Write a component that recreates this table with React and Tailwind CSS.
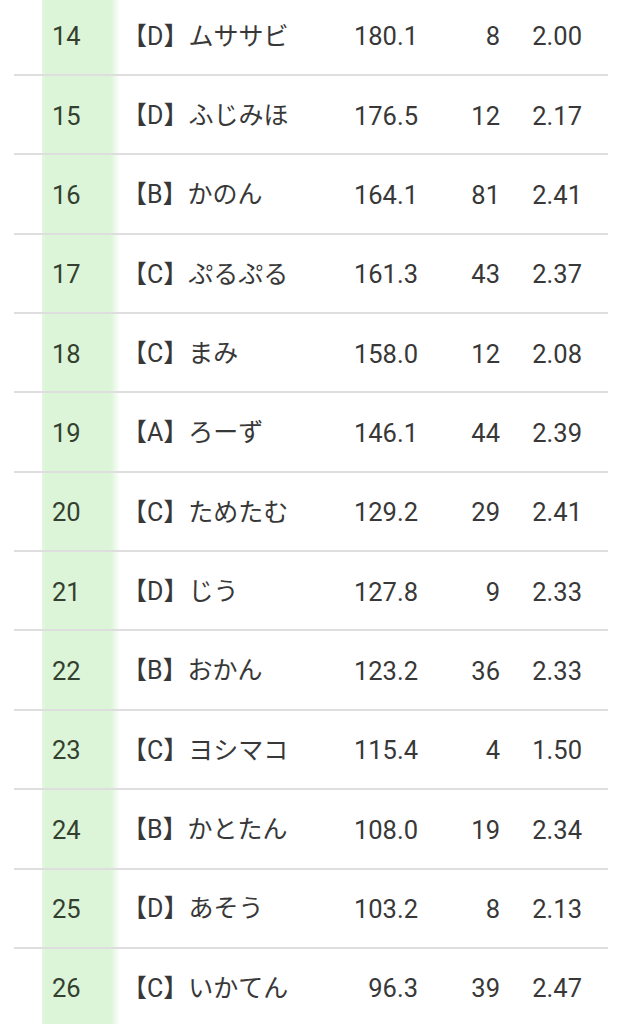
import React from 'react';

const rows = [
    [14, 'D', 'ムササビ', '180.1', '8', '2.00'],
    [15, 'D', 'ふじみほ', '176.5', '12', '2.17'],
    [16, 'B', 'かのん', '164.1', '81', '2.41'],
    [17, 'C', 'ぷるぷる', '161.3', '43', '2.37'],
    [18, 'C', 'まみ', '158.0', '12', '2.08'],
    [19, 'A', 'ろーず', '146.1', '44', '2.39'],
    [20, 'C', 'ためたむ', '129.2', '29', '2.41'],
    [21, 'D', 'じう', '127.8', '9', '2.33'],
    [22, 'B', 'おかん', '123.2', '36', '2.33'],
    [23, 'C', 'ヨシマコ', '115.4', '4', '1.50'],
    [24, 'B', 'かとたん', '108.0', '19', '2.34'],
    [25, 'D', 'あそう', '103.2', '8', '2.13'],
    [26, 'C', 'いかてん', '96.3', '39', '2.47'],
];

const App = () => {
    return (
        <div className="w-[622px] h-[1024px] overflow-hidden bg-white font-['Roboto','Noto_Sans_CJK_JP',sans-serif] text-[#383838]">
            <div className="-mt-[3.4px]">
                {rows.map(([rank, grade, name, score, count, ratio]) => (
                    <div
                        key={rank}
                        className="ml-[14px] w-[594px] h-[79.36px] flex items-center border-b-2 border-[#dedede] pl-[28px] pr-[26px] text-[25.5px]"
                    >
                        <div className="w-[78px] h-full flex items-center pl-[10px] pt-[2px] text-[#34402f] bg-[linear-gradient(to_right,#e4f7e1,#dcf5d8_5%,#dcf5d8_88%,#ffffff)]">
                            {rank}
                        </div>
                        <div className="flex-1 flex items-center whitespace-nowrap pl-[2px] pt-[2px] text-[25px]">
                            <span>【{grade}】</span>
                            <span>{name}</span>
                        </div>
                        <div className="w-[100px] pt-[2px] text-right">{score}</div>
                        <div className="w-[82px] pt-[2px] text-right">{count}</div>
                        <div className="w-[82px] pt-[2px] text-right">{ratio}</div>
                    </div>
                ))}
            </div>
        </div>
    );
};

export default App;
